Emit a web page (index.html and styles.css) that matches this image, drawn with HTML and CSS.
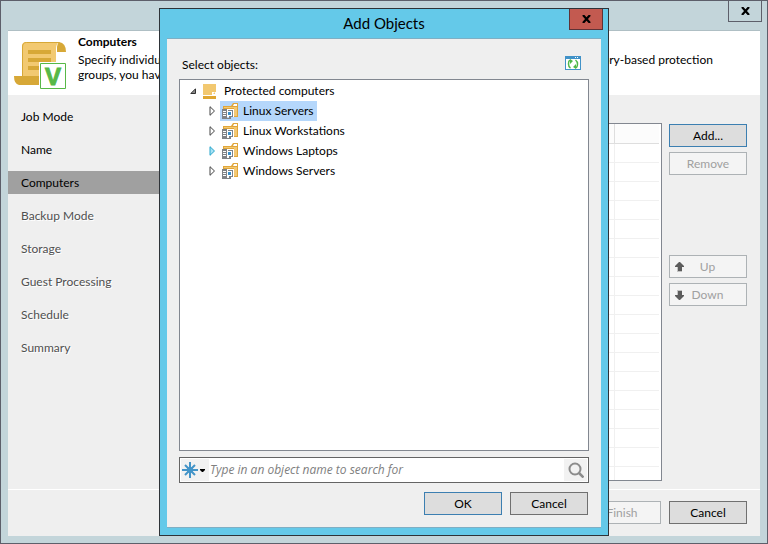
FILE: index.html
```html
<!DOCTYPE html>
<html lang="en">
<head>
<meta charset="utf-8">
<title>Computers</title>
<link rel="stylesheet" href="styles.css">
</head>
<body>
<svg class="defs" aria-hidden="true">
  <symbol id="twisty" viewBox="0 0 6 10"><path d="M1 .7v8.600L5.500 5z"/></symbol>
  <symbol id="group" viewBox="0 0 16 16">
    <path fill="#e0a63a" d="M1 3h8l2-3h5v14h-4V6H1z"/>
    <path fill="#fff" d="M12 1h3v2h-4z"/>
    <path fill="#f3c873" d="M2 4h13v9h-3V5H2z"/>
    <path fill="#fff" d="M5 6h7v8H5z"/>
    <path fill="#808285" d="M0 6h5v10H0zM6 7h5v7H9v2H5v-1h2v-2h3V8H6z"/>
    <path fill="#fff" d="M1 8h3v1H1zM1 10h3v1H1zM1 12h3v1H1z"/>
    <path fill="#3a8fc8" d="M6 9h3v3H6z"/>
  </symbol>
</svg>
<div class="window">
  <header class="titlebar"><button class="close" type="button" aria-label="Close wizard"><svg viewBox="0 0 9 8" width="9" height="8"><path d="M1 0l7 8M8 0L1 8" stroke="#000" stroke-width="2.2"/></svg></button></header>
  <div class="client">
    <section class="banner">
      <svg class="scroll" viewBox="0 0 52 47" width="52" height="47" aria-hidden="true">
        <path fill="#f2c971" d="M12 0h33q-3 2-3 7v36H8V4q0-4 4-4z"/>
        <path fill="#d7a837" d="M45 0q7 1 7 10h-9V5q0-3 2-5zM0 34h26v9H5q-5-1-5-9zM14 8h23v4H14zM14 16h23v4H14zM14 24h12v4H14z"/>
        <path fill="none" stroke="#d7a837" d="M8.500 34V5q0-4.500 4-4.500h33"/>
        <path fill="#fff" d="M25 20h27v27H25z"/>
        <path fill="#fff" stroke="#57b847" d="M26.500 21.500h25v25h-25z"/>
        <text class="mark" x="39" y="43" text-anchor="middle">V</text>
      </svg>
      <div class="intro">
        <h1>Computers</h1>
        <p class="split"><span>Specify individual</span><span>Directory-based protection</span></p>
        <p>groups, you have</p>
      </div>
    </section>
    <div class="body">
      <nav>
        <ol class="steps">
          <li>Job Mode</li>
          <li>Name</li>
          <li class="current" aria-current="step">Computers</li>
          <li class="later">Backup Mode</li>
          <li class="later">Storage</li>
          <li class="later">Guest Processing</li>
          <li class="later">Schedule</li>
          <li class="later">Summary</li>
        </ol>
      </nav>
      <main class="work">
        <div class="grid-box">
          <table class="grid">
            <thead><tr><th></th><th class="size"></th></tr></thead>
            <tbody>
              <tr><td></td><td></td></tr><tr><td></td><td></td></tr><tr><td></td><td></td></tr>
              <tr><td></td><td></td></tr><tr><td></td><td></td></tr><tr><td></td><td></td></tr>
              <tr><td></td><td></td></tr><tr><td></td><td></td></tr><tr><td></td><td></td></tr>
              <tr><td></td><td></td></tr><tr><td></td><td></td></tr><tr><td></td><td></td></tr>
              <tr><td></td><td></td></tr><tr><td></td><td></td></tr><tr><td></td><td></td></tr>
              <tr><td></td><td></td></tr><tr><td></td><td></td></tr><tr><td></td><td></td></tr>
            </tbody>
          </table>
        </div>
        <div class="actions">
          <button class="btn primary" type="button">Add...</button>
          <button class="btn" type="button" disabled>Remove</button>
          <button class="btn move first" type="button" disabled><svg viewBox="0 0 9 10" width="9" height="10"><path fill="#c4c4c4" d="M2 5h5v5H2z"/><path fill="#5c5c5c" d="M4 0h1l4 4v1H7v4H3V5H0V4z"/></svg><span>Up</span></button>
          <button class="btn move" type="button" disabled><svg viewBox="0 0 9 10" width="9" height="10"><path fill="#c4c4c4" d="M2 0h5v5H2z"/><path fill="#5c5c5c" d="M4 10h1l4-4V5H7V1H3v4H0v1z"/></svg><span>Down</span></button>
        </div>
      </main>
    </div>
    <footer class="footer">
      <button class="btn" type="button" disabled>Finish</button>
      <button class="btn" type="button">Cancel</button>
    </footer>
  </div>
</div>

<div class="dialog" role="dialog" aria-labelledby="dialog-title">
  <header class="dialog-title">
    <h2 id="dialog-title">Add Objects</h2>
    <button class="close red" type="button" aria-label="Close"><svg viewBox="0 0 9 8" width="9" height="8"><path d="M1 0l7 8M8 0L1 8" stroke="#000" stroke-width="2.2"/></svg></button>
  </header>
  <div class="dialog-body">
    <div class="caption">
      <span id="tree-label">Select objects:</span>
      <button class="refresh" type="button" aria-label="Refresh"><svg viewBox="0 0 16 14" width="16" height="14"><path fill="#4192c8" d="M0 0h16v14H0z"/><path fill="#fff" d="M1 3h14v10H1zM10 1h1v1h-1zM12 1h1v1h-1z"/><g fill="none" stroke="#4fb848" stroke-width="1.500"><path d="M6 4.500H4.500Q3.500 5 3.500 8t2 4M10 11.500h1.500q1-1 1-3.500t-2-4"/></g><path fill="#4fb848" d="M5 3l3 2-3 3zM11 8v5L8 11z"/></svg></button>
    </div>
    <ul class="tree" role="tree" aria-labelledby="tree-label">
      <li role="treeitem" aria-expanded="true">
        <div class="row"><svg class="open" viewBox="0 0 6 6" width="6" height="6"><path fill="#8c8c8c" stroke="#333" d="M5.500 .8v4.700H.8z"/></svg><svg class="root" viewBox="0 0 13 15" width="13" height="15"><path fill="#f2c870" d="M0 0h13v11H0z"/><path fill="#fff" d="M9 11V8h4v3z"/><path fill="#f2c870" d="M10 10l2-2v2z"/><path fill="#dfa632" d="M0 12h13v3H0z"/></svg><span class="name">Protected computers</span></div>
        <ul role="group">
          <li class="row" role="treeitem"><svg class="twisty" width="6" height="10"><use href="#twisty"/></svg><span class="item selected"><svg width="16" height="16"><use href="#group"/></svg>Linux Servers</span></li>
          <li class="row" role="treeitem"><svg class="twisty" width="6" height="10"><use href="#twisty"/></svg><span class="item"><svg width="16" height="16"><use href="#group"/></svg>Linux Workstations</span></li>
          <li class="row" role="treeitem"><svg class="twisty hot" width="6" height="10"><use href="#twisty"/></svg><span class="item"><svg width="16" height="16"><use href="#group"/></svg>Windows Laptops</span></li>
          <li class="row" role="treeitem"><svg class="twisty" width="6" height="10"><use href="#twisty"/></svg><span class="item"><svg width="16" height="16"><use href="#group"/></svg>Windows Servers</span></li>
        </ul>
      </li>
    </ul>
    <div class="search">
      <button class="filter" type="button" aria-label="Object type"><svg viewBox="0 0 24 16" width="24" height="16"><path fill="none" stroke="#4394c8" stroke-width="2" d="M8 0v16M0 8h16M3 3l10 10M13 3L3 13"/><circle cx="8" cy="8" r="3" fill="#4394c8"/><path d="M18 7h5v1l-2 2h-1l-2-2z"/></svg></button>
      <input type="text" aria-label="Search objects" placeholder="Type in an object name to search for">
      <button class="find" type="button" aria-label="Search"><svg viewBox="0 0 16 16" width="16" height="16" fill="none" stroke="#8c8c8c"><circle cx="7" cy="7" r="5.500" stroke-width="2"/><path stroke-width="2.500" d="M11 11l4.500 4.500"/></svg></button>
    </div>
    <div class="dialog-actions">
      <button class="btn primary" type="button">OK</button>
      <button class="btn" type="button">Cancel</button>
    </div>
  </div>
</div>
</body>
</html>
```
FILE: styles.css
```css
* { box-sizing: border-box; }
body, h1, h2, p, ul, ol { margin: 0; padding: 0; }
ul, ol { list-style: none; }
svg { display: block; flex: none; }
.defs { display: none; }
body, button, input { font: 12px/16px Lato, "Open Sans", sans-serif; color: #000; }
button { padding: 0; }

.window { min-height: 100vh; display: flex; flex-direction: column; padding: 0 7px 7px; border: 1px solid #5d5f6a; background: #c3d5da; }
.titlebar { height: 29px; flex: none; display: flex; justify-content: flex-end; }
.close { width: 34px; height: 21px; margin-right: -2px; display: flex; align-items: center; justify-content: center; border: 1px solid #5d5f6a; border-top: 0; background: none; }
.client { flex: 1; display: flex; flex-direction: column; border-top: 1px solid #afbfc4; background: #efefef; }

.banner { height: 64px; flex: none; display: flex; gap: 12px; padding: 3px 47px 0 6px; background: #fff; }
.scroll { margin-top: 8px; }
.mark { font: bold 24px "Liberation Sans", Arial, sans-serif; fill: #57b847; stroke: #57b847; }
.intro { flex: 1; line-height: 15px; }
h1 { font-size: 12px; line-height: 16px; margin-bottom: 2px; }
.split { display: flex; justify-content: space-between; }

.body { flex: 1; display: flex; }
nav { width: 170px; flex: none; }
.steps { padding-top: 10px; display: grid; gap: 10px; }
.steps li { padding-left: 13px; line-height: 23px; }
.steps .current { background: #a0a0a0; }
.steps .later { color: #505050; text-shadow: 1px 1px #fff; }
.work { flex: 1; display: flex; gap: 7px; padding: 28px 13px 8px 20px; }
.grid-box { flex: 1; height: 358px; overflow: hidden; padding: 0 2px 0 0; border: 1px solid #828790; background: #fff; }
.grid { width: 100%; table-layout: fixed; border-collapse: separate; border-spacing: 0; }
.grid th, .grid td { height: 19px; padding: 0; border-right: 1px solid #f0f0f0; border-bottom: 1px solid #f0f0f0; }
.grid th { height: 20px; background: #fcfcfc; border-color: #dedede; }
.grid tr > :last-child { border-right: 0; }
.grid .size { width: 44px; }
.actions { width: 78px; display: flex; flex-direction: column; gap: 5px; padding-top: 1px; }

.btn { width: 78px; height: 23px; flex: none; border: 1px solid #707070; background: #ddd; }
.btn.primary { border-color: #3c7fb1; }
.btn:disabled { color: #a0a0a0; border-color: #adb2b5; background: #f4f4f4; }
.move { display: flex; align-items: center; padding: 0 5px; }
.move span { flex: 1; padding-right: 10px; }
.move.first { margin-top: 75px; }
.footer { height: 47px; flex: none; display: flex; justify-content: flex-end; gap: 8px; padding: 11px 13px 0; border-top: 1px solid #fff; }

.dialog { position: absolute; inset: 8px 159px; display: flex; flex-direction: column; padding: 0 7px 7px; border: 1px solid #2e3338; background: #64c9e9; }
.dialog-title { height: 29px; flex: none; display: grid; grid-template-columns: 1fr auto 1fr; }
.dialog-title h2 { grid-column: 2; font-size: 15px; font-weight: 400; line-height: 29px; }
.dialog-title .close { justify-self: end; }
.close.red { background: #c35a50; border-color: #5e3236; }
.dialog-body { flex: 1; display: flex; flex-direction: column; padding: 17px 12px 12px; border-top: 1px solid #7fafc4; border-bottom: 1px solid #7fafc4; background: #efefef; }
.caption { display: flex; justify-content: space-between; padding: 0 8px 0 3px; margin-bottom: 5px; line-height: 18px; }
.refresh { width: 16px; height: 14px; border: 0; background: none; }
.tree { flex: 1; padding: 1px 9px; border: 1px solid #828790; background: #fff; }
.tree ul { padding-left: 20px; }
.row { height: 20px; display: flex; align-items: center; }
.open { margin: 0 7px 0 1px; }
.root { margin-right: 8px; }
.twisty { margin: 0 5px 0 0; fill: #fff; stroke: #444; }
.twisty.hot { fill: #a9e2f5; stroke: #27a5cb; }
.item { height: 20px; display: flex; align-items: center; gap: 5px; padding: 0 3px 0 2px; }
.selected { background: #b5d7fb; }
.search { height: 26px; flex: none; display: flex; margin-top: 6px; padding: 1px; border: 1px solid #646464; background: #fff; }
.search button { border: 0; background: #f2f2f2; }
.search input { flex: 1; min-width: 0; padding: 0 1px; border: 0; outline: 0; background: #fff; font-family: "Open Sans", sans-serif; }
.search input::placeholder { color: #808080; opacity: 1; font-style: italic; }
.filter { width: 28px; display: flex; align-items: center; padding-left: 1px; }
.find { width: 23px; display: grid; place-items: center; }
.dialog-actions { display: flex; justify-content: flex-end; gap: 8px; margin-top: 9px; padding-right: 1px; }
```
